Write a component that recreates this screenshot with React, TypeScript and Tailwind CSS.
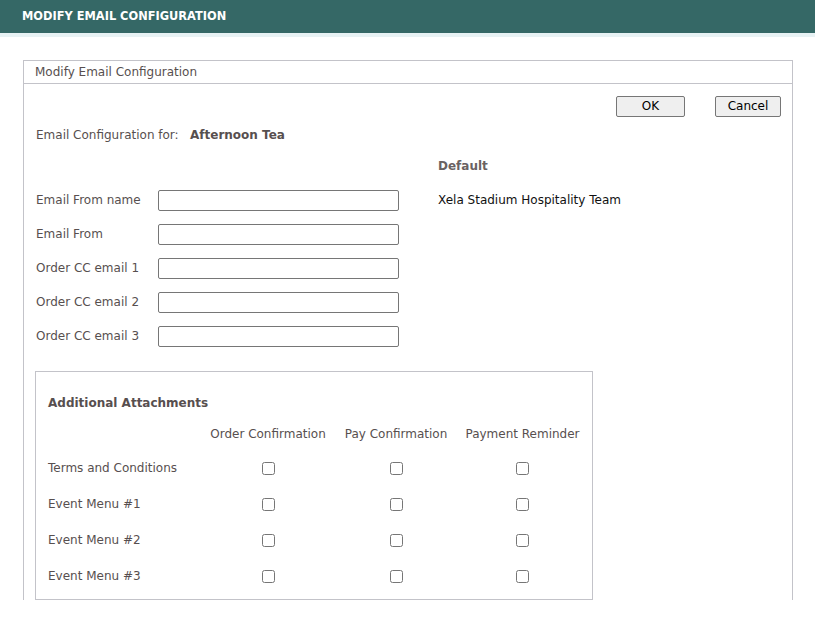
import React from "react";

const labelColor = "text-[#574f4f]";

function Field({ label, extra }: { label: string; extra?: string }) {
  return (
    <div className="grid grid-cols-[122px_241px_39px_1fr] items-center h-[34px]">
      <span className={labelColor}>{label}</span>
      <input
        type="text"
        className="h-[21px] w-[241px] border border-[#767676] rounded-[2px] bg-white px-1 outline-none"
      />
      <span />
      <span className="text-[#111]">{extra ?? ""}</span>
    </div>
  );
}

function AttachRow({ label }: { label: string }) {
  return (
    <div className="grid grid-cols-[153px_134px_122px_131px] items-center h-[36px]">
      <span className={labelColor}>{label}</span>
      <div className="flex justify-center">
        <input type="checkbox" className="m-0 w-[13px] h-[13px]" />
      </div>
      <div className="flex justify-center">
        <input type="checkbox" className="m-0 w-[13px] h-[13px]" />
      </div>
      <div className="flex justify-center">
        <input type="checkbox" className="m-0 w-[13px] h-[13px]" />
      </div>
    </div>
  );
}

export default function App() {
  return (
    <div className="w-[815px] h-[620px] bg-white text-[12px] leading-[15px] font-['DejaVu_Sans',Verdana,sans-serif] overflow-hidden">
      <div className="h-[33px] bg-[#356866] flex items-center pl-[22px]">
        <span className="text-white font-bold text-[11.4px]">MODIFY EMAIL CONFIGURATION</span>
      </div>
      <div className="h-[4px] bg-[#e7f2f4]" />

      <div className="mt-[23px] ml-[23px] w-[770px] border-l border-r border-t border-[#c3c3c9]">
        <div className="h-[23px] border-b border-[#c3c3c9] flex items-center pl-[11px] text-[#574f4f]">
          Modify Email Configuration
        </div>

        <div className="px-[12px]">
          <div className="flex justify-end pt-[12px] pr-0 gap-[30px] mr-[-1px]">
            <button className="w-[69px] h-[21px] bg-[#efefef] border border-[#767676] rounded-[2px] text-[12px] text-black">
              OK
            </button>
            <button className="w-[66px] h-[21px] bg-[#efefef] border border-[#767676] rounded-[2px] text-[12px] text-black">
              Cancel
            </button>
          </div>

          <div className="mt-[8px] h-[21px] flex items-center">
            <span className={`${labelColor} w-[154px]`}>Email Configuration for:</span>
            <span className="font-bold text-[#574f4f]">Afternoon Tea</span>
          </div>

          <div className="mt-[10px] h-[21px] grid grid-cols-[402px_1fr] items-center">
            <span />
            <span className="font-bold text-[#6a6262]">Default</span>
          </div>

          <div className="mt-[6px]">
            <Field label="Email From name" extra="Xela Stadium Hospitality Team" />
            <Field label="Email From" />
            <Field label="Order CC email 1" />
            <Field label="Order CC email 2" />
            <Field label="Order CC email 3" />
          </div>

          <div className="mt-[18px] -ml-px w-[558px] border border-[#c3c3c9] pl-[12px] pt-[16px] pb-[5px]">
            <div className="h-[31px] flex items-center font-bold text-[#574f4f]">
              Additional Attachments
            </div>
            <div className="grid grid-cols-[153px_134px_122px_131px] items-center h-[31px]">
              <span />
              <span className={`${labelColor} text-center`}>Order Confirmation</span>
              <span className={`${labelColor} text-center`}>Pay Confirmation</span>
              <span className={`${labelColor} text-center`}>Payment Reminder</span>
            </div>
            <AttachRow label="Terms and Conditions" />
            <AttachRow label="Event Menu #1" />
            <AttachRow label="Event Menu #2" />
            <AttachRow label="Event Menu #3" />
          </div>
        </div>
      </div>
    </div>
  );
}
